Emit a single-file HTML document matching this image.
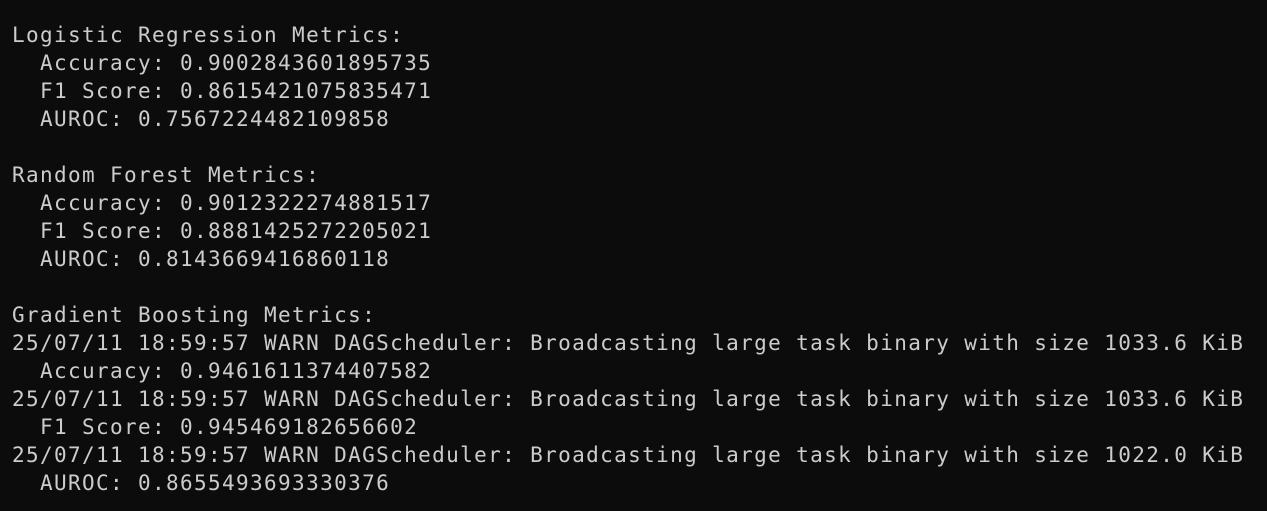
<!DOCTYPE html>
<html><head><style>
html,body{margin:0;background:#0c0c0c;width:1267px;height:511px;overflow:hidden}
pre{margin:0;padding:21px 0 0 12px;font-family:"DejaVu Sans Mono","Liberation Mono",monospace;font-size:21px;letter-spacing:1.36px;line-height:28px;color:#cccccc}
</style></head><body><pre>Logistic Regression Metrics:
  Accuracy: 0.9002843601895735
  F1 Score: 0.8615421075835471
  AUROC: 0.7567224482109858

Random Forest Metrics:
  Accuracy: 0.9012322274881517
  F1 Score: 0.8881425272205021
  AUROC: 0.8143669416860118

Gradient Boosting Metrics:
25/07/11 18:59:57 WARN DAGScheduler: Broadcasting large task binary with size 1033.6 KiB
  Accuracy: 0.9461611374407582
25/07/11 18:59:57 WARN DAGScheduler: Broadcasting large task binary with size 1033.6 KiB
  F1 Score: 0.945469182656602
25/07/11 18:59:57 WARN DAGScheduler: Broadcasting large task binary with size 1022.0 KiB
  AUROC: 0.8655493693330376</pre></body></html>
